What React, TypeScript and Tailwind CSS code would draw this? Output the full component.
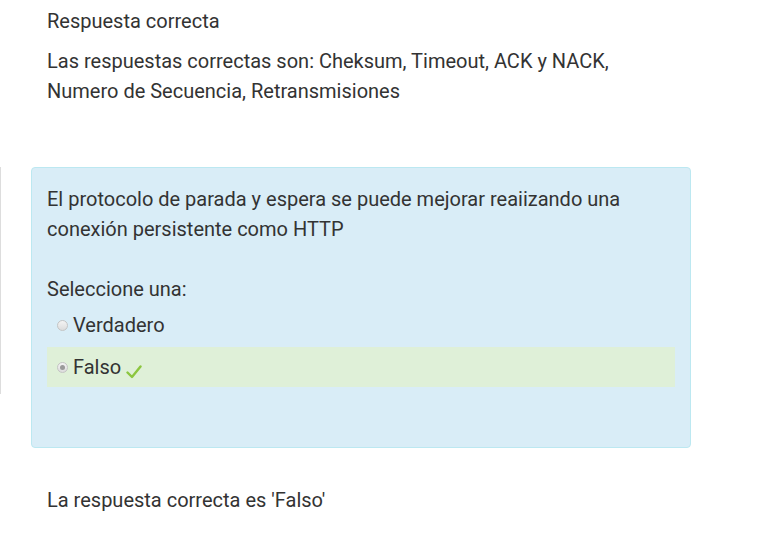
import React from "react";

function Radio({ checked }: { checked?: boolean }) {
  return (
    <span className="relative inline-flex h-[11px] w-[11px] items-center justify-center rounded-full border border-[#c4c4c4] bg-gradient-to-b from-[#f4f4f4] to-[#dcdcdc]">
      {checked && <span className="h-[5px] w-[5px] rounded-full bg-[#9a9a9a]" />}
    </span>
  );
}

export default function App() {
  return (
    <div
      className="relative h-[547px] w-[768px] overflow-hidden bg-white text-[20px] leading-[30px] text-[#333]"
      style={{ fontFamily: "Roboto, 'Liberation Sans', sans-serif" }}
    >
      <div className="absolute left-0 top-[167px] h-[227px] w-px bg-[#dddddd]" />
      <div className="pl-[47px] pt-[6px]">
        <p>Respuesta correcta</p>
        <p className="mt-[10px]">
          Las respuestas correctas son: Cheksum, Timeout, ACK y NACK,
          <br />
          Numero de Secuencia, Retransmisiones
        </p>
      </div>
      <div className="ml-[31px] mt-[61px] w-[660px] rounded-[4px] border border-[#bce8f1] bg-[#d9edf7] px-[15px] pb-[60px] pt-[16px]">
        <p>
          El protocolo de parada y espera se puede mejorar reaiizando una
          <br />
          conexión persistente como HTTP
        </p>
        <p className="mt-[30px]">Seleccione una:</p>
        <div className="mt-[6px] flex h-[30px] items-center pl-[10px]">
          <Radio />
          <span className="ml-[5px]">Verdadero</span>
        </div>
        <div className="mt-[7px] flex h-[40px] items-center bg-[#dff0d8] pl-[10px]">
          <Radio checked />
          <span className="ml-[5px]">Falso</span>
          <svg className="ml-[5px] mt-[9px]" width="16" height="14" viewBox="0 0 16 14">
            <path d="M1.5 7.5 L6 12 L14.5 1.5" fill="none" stroke="#8cc63f" strokeWidth="2.4" strokeLinecap="round" strokeLinejoin="round" />
          </svg>
        </div>
      </div>
      <p className="mt-[37px] pl-[47px]">La respuesta correcta es 'Falso'</p>
    </div>
  );
}
